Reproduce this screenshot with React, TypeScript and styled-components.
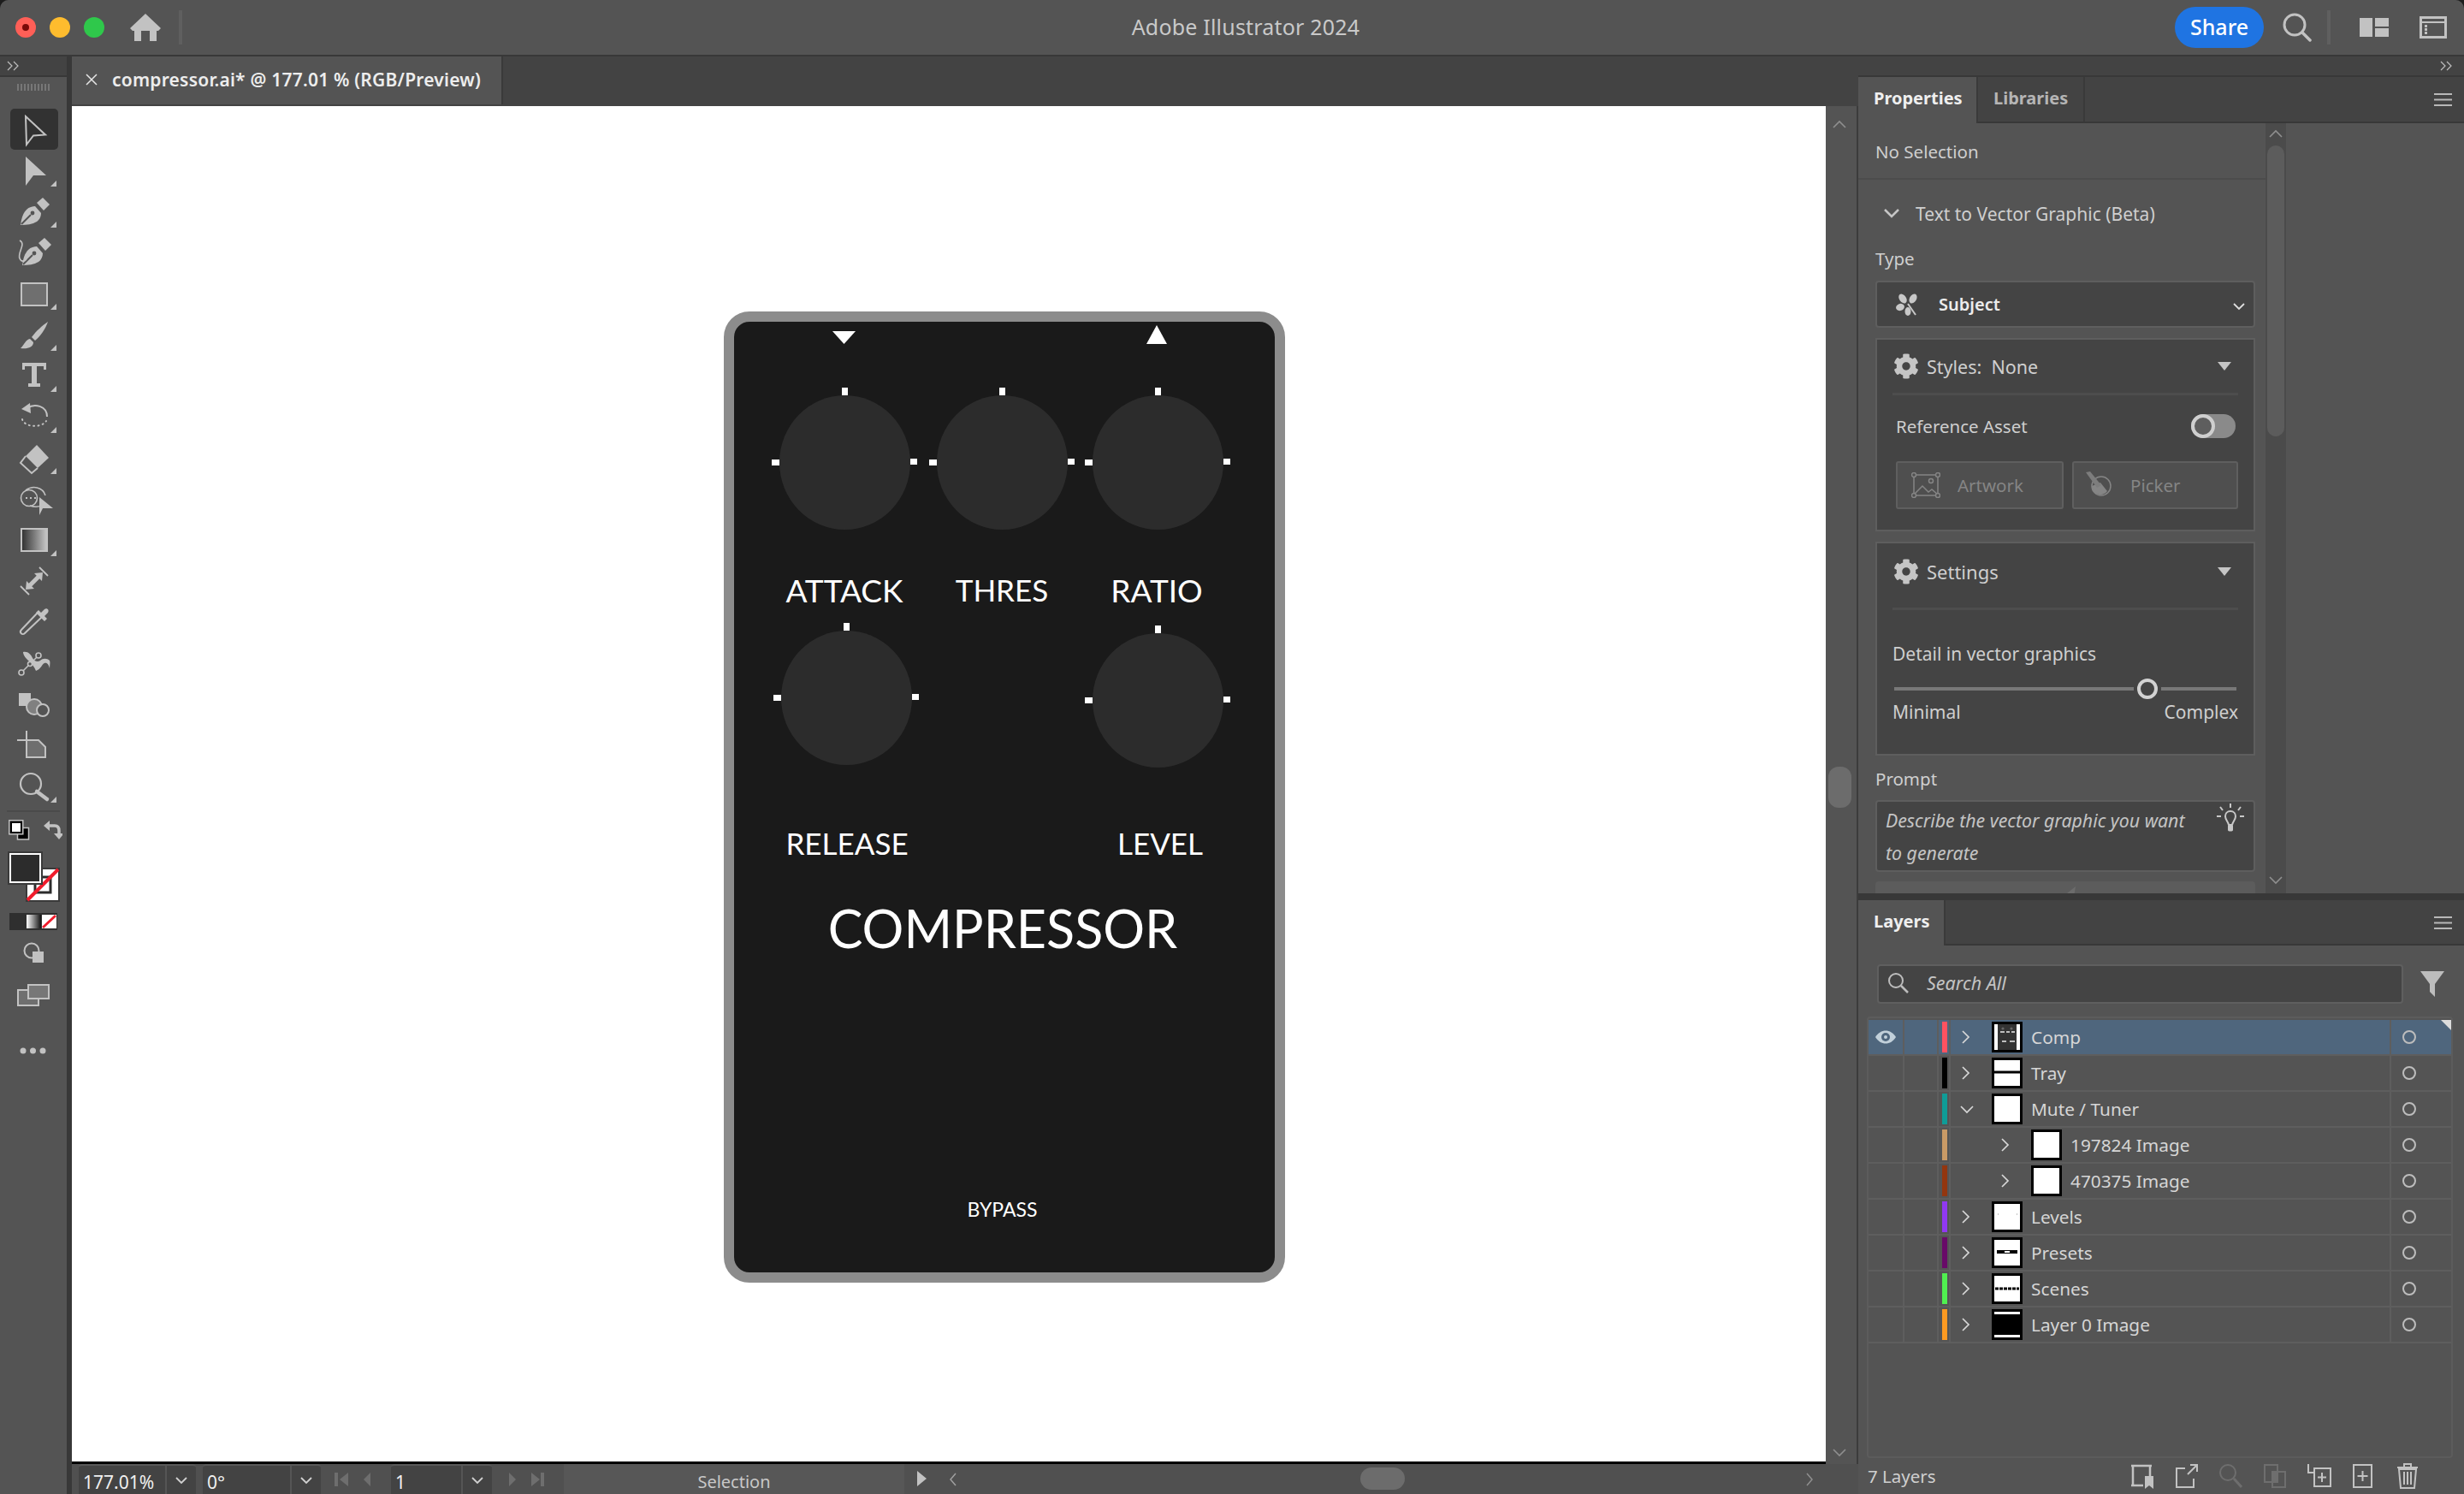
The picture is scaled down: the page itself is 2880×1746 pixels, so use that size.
import React from "react";
import styled, { createGlobalStyle } from "styled-components";
import { FaCog } from "react-icons/fa";

const ICON = "#c2c2c2";
const UI_FONT = `"Noto Sans", "Open Sans", sans-serif`;

const GlobalStyle = createGlobalStyle`
  html, body { margin: 0; padding: 0; background: #1d1d1d; overflow: hidden; }
  * { box-sizing: border-box; }
`;

const Window = styled.div`
  width: 2880px;
  height: 1746px;
  display: flex;
  flex-direction: column;
  background: #383838;
  border-radius: 10px 10px 0 0;
  overflow: hidden;
  font-family: ${UI_FONT};
  font-size: 20.5px;
  color: #cfcfcf;
`;

/* title bar */
const TitleBar = styled.header`
  position: relative;
  flex: 0 0 64px;
  display: flex;
  align-items: center;
  padding-left: 18px;
  background: #545454;
`;
const Light = styled.span<{ $c: string }>`
  width: 24px;
  height: 24px;
  margin-right: 16px;
  border-radius: 50%;
  background: ${(p) => p.$c};
  display: flex;
  align-items: center;
  justify-content: center;
`;
const LightDot = styled.span`
  width: 8px;
  height: 8px;
  border-radius: 50%;
  background: #7a0a08;
`;
const HomeIcon = styled.svg`
  margin-left: 14px;
  width: 36px;
  height: 32px;
`;
const TitleSep = styled.span`
  width: 4px;
  height: 40px;
  background: #5f5f5f;
`;
const WinTitle = styled.div`
  position: absolute;
  left: 32px;
  right: 0;
  top: 16px;
  text-align: center;
  font-size: 25px;
  line-height: 30px;
  letter-spacing: 0.2px;
  color: #c9c9c9;
`;
const TitleRight = styled.div`
  margin-left: auto;
  display: flex;
  align-items: center;
  padding-right: 20px;
`;
const ShareBtn = styled.div`
  width: 104px;
  height: 48px;
  border-radius: 24px;
  background: #1f74e2;
  color: #fff;
  font-size: 25px;
  font-weight: 500;
  line-height: 46px;
  text-align: center;
`;

const Main = styled.div`
  flex: 1;
  display: flex;
  min-height: 0;
  padding-top: 2px;
`;

/* left tool column */
const ToolColumn = styled.aside`
  flex: 0 0 78px;
  margin-right: 6px;
  display: flex;
  flex-direction: column;
  background: #545454;
`;
const MiniStrip = styled.div`
  flex: 0 0 24px;
  display: flex;
  align-items: center;
  padding: 0 8px;
  background: #434343;
  border-bottom: 2px solid #383838;
  color: #bdbdbd;
  font-size: 16px;
  line-height: 1;
`;
const Grip = styled.div`
  height: 8px;
  margin: 8px auto 21px;
  width: 38px;
  background: repeating-linear-gradient(90deg, #777 0 2px, transparent 2px 4px);
`;
const ToolCell = styled.div<{ $active?: boolean }>`
  width: 56px;
  height: 48px;
  margin-left: 12px;
  background: ${(p) => (p.$active ? "#323232" : "transparent")};
  border-radius: 5px;
  display: flex;
`;
const ToolSvg = styled.svg`
  width: 56px;
  height: 48px;
`;
const ToolSep = styled.div`
  height: 2px;
  margin: 4px 8px 9px;
  background: #4a4a4a;
`;
const ColorControls = styled.div`
  display: flex;
  flex-direction: column;
  align-items: center;
`;

/* document column */
const DocColumn = styled.section`
  flex: 0 0 2088px;
  display: flex;
  flex-direction: column;
  min-width: 0;
`;
const TabBar = styled.div`
  flex: 0 0 58px;
  display: flex;
  background: #434343;
`;
const DocTab = styled.div`
  width: 504px;
  height: 56px;
  display: flex;
  align-items: center;
  padding: 0 0 2px 16px;
  background: #545454;
  color: #ededed;
  font-weight: 600;
  font-size: 21px;
  letter-spacing: 0.22px;
  border-right: 2px solid #3a3a3a;
`;
const TabClose = styled.svg`
  width: 14px;
  height: 14px;
  margin-right: 17px;
`;
const CanvasRow = styled.div`
  flex: 1;
  display: flex;
  min-height: 0;
`;
const Canvas = styled.div`
  position: relative;
  flex: 0 0 2050px;
  background: #fff;
  border-bottom: 3px solid #000;
`;
const VScroll = styled.div`
  flex: 1;
  background: #545454;
  display: flex;
  flex-direction: column;
  align-items: center;
  justify-content: space-between;
  padding: 16px 5px 8px 0;
  position: relative;
  border-right: 2px solid #3c3c3c;
`;
const VThumb = styled.div`
  position: absolute;
  top: 772px;
  left: 3px;
  width: 27px;
  height: 48px;
  border-radius: 12px;
  background: #6c6c6c;
`;

/* artboard objects: placed freely on the canvas */
const Pedal = styled.div`
  position: absolute;
  left: 762px;
  top: 240px;
  width: 656px;
  height: 1135px;
  border: 12px solid #8c8c8c;
  border-radius: 30px;
  background: #1a1a1a;
  font-family: "Lato", "Open Sans", sans-serif;
  color: #fff;
`;
const Knob = styled.div<{ $x: number; $y: number }>`
  position: absolute;
  left: ${(p) => p.$x - 858 - 76.5}px;
  top: ${(p) => p.$y - 376 - 78.5}px;
  width: 153px;
  height: 157px;
  border-radius: 50%;
  background: #2c2c2c;
`;
const Tick = styled.span<{ $side: "top" | "left" | "right" }>`
  position: absolute;
  background: #fff;
  ${(p) =>
    p.$side === "top"
      ? "left: 73px; top: -9px; width: 7px; height: 9px;"
      : p.$side === "left"
        ? "left: -9px; top: 75px; width: 9px; height: 7px;"
        : "right: -8px; top: 74px; width: 8px; height: 7px;"}
`;
const PedalLabel = styled.div<{ $x: number; $y: number; $size: number }>`
  position: absolute;
  left: ${(p) => p.$x - 858}px;
  top: ${(p) => p.$y - 377}px;
  transform: translate(-50%, -50%);
  font-size: ${(p) => p.$size}px;
  line-height: 1;
  white-space: nowrap;
`;
const Marker = styled.svg<{ $x: number; $y: number }>`
  position: absolute;
  left: ${(p) => p.$x - 858}px;
  top: ${(p) => p.$y - 376}px;
`;

/* status bar */
const StatusBar = styled.footer`
  flex: 0 0 35px;
  min-height: 0;
  overflow: hidden;
  display: flex;
  align-items: stretch;
  padding-left: 8px;
  background: #505050;
  font-size: 20px;
  position: relative;
`;
const Combo = styled.div<{ $w: number }>`
  width: ${(p) => p.$w}px;
  display: flex;
  background: #434343;
  border-top: 2px solid #595959;
  border-radius: 4px 4px 0 0;
  margin-right: 8px;
`;
const ComboValue = styled.div`
  flex: 1;
  padding-left: 5px;
  font-size: 21px;
  line-height: 38px;
  color: #f0f0f0;
  white-space: nowrap;
`;
const ComboArrow = styled.div`
  flex: 0 0 36px;
  border-left: 2px solid #555;
  display: flex;
  align-items: center;
  justify-content: center;
`;
const NavIcons = styled.svg`
  width: 58px;
  height: 32px;
  align-self: center;
`;
const StatusSel = styled.div`
  width: 398px;
  margin-left: 10px;
  background: #575757;
  text-align: center;
  line-height: 42px;
  color: #c8c8c8;
`;
const HTrack = styled.div`
  flex: 1;
  display: flex;
  align-items: center;
  padding: 0 52px 0 24px;
  justify-content: space-between;
  position: relative;
`;
const HThumb = styled.div`
  position: absolute;
  left: 505px;
  top: 4px;
  width: 52px;
  height: 26px;
  border-radius: 13px;
  background: #6c6c6c;
`;

/* right dock */
const Dock = styled.aside`
  flex: 0 0 708px;
  display: flex;
  flex-direction: column;
  min-width: 0;
`;
const DockStrip = styled.div`
  flex: 0 0 24px;
  background: #434343;
  display: flex;
  align-items: center;
  justify-content: flex-end;
  padding-right: 14px;
  border-bottom: 2px solid #383838;
  color: #bdbdbd;
  font-size: 16px;
`;
const TabRow = styled.div`
  flex: 0 0 54px;
  display: flex;
  background: #434343;
  border-bottom: 2px solid #383838;
`;
const PanelTab = styled.div<{ $active?: boolean; $w: number }>`
  width: ${(p) => p.$w}px;
  background: ${(p) => (p.$active ? "#545454" : "#434343")};
  margin-bottom: ${(p) => (p.$active ? "-2px" : "0")};
  border-right: 2px solid #3a3a3a;
  color: ${(p) => (p.$active ? "#efefef" : "#b5b5b5")};
  font-weight: 700;
  font-size: 20px;
  line-height: 50px;
  padding-left: 18px;
`;
const Burger = styled.svg`
  margin: 19px 14px 0 auto;
  width: 21px;
  height: 15px;
`;
const PropsPanel = styled.div`
  flex: 0 0 902px;
  display: flex;
  background: #545454;
  overflow: hidden;
  border-bottom: 2px solid #383838;
`;
const PropsBody = styled.div`
  flex: 0 0 476px;
  display: flex;
  flex-direction: column;
  & > * {
    flex-shrink: 0;
  }
`;
const NoSel = styled.div`
  height: 66px;
  line-height: 66px;
  padding-left: 20px;
  border-bottom: 2px solid #4c4c4c;
`;
const SectionHead = styled.div`
  height: 78px;
  display: flex;
  align-items: center;
  padding: 2px 0 0 30px;
  gap: 19px;
  font-size: 21px;
`;
const FieldLabel = styled.div`
  margin-left: 20px;
  line-height: 28px;
`;
const SelectBox = styled.div`
  margin: 12px 0 0 20px;
  width: 444px;
  height: 55px;
  display: flex;
  align-items: center;
  padding: 0 10px 0 22px;
  background: #444;
  border: 2px solid #5e5e5e;
  border-radius: 4px;
  color: #ececec;
  font-weight: 600;
  gap: 22px;
  font-size: 20px;
`;
const SubBox = styled.div<{ $h: number; $mt: number }>`
  margin: ${(p) => p.$mt}px 0 0 20px;
  width: 444px;
  height: ${(p) => p.$h}px;
  background: #444;
  border: 2px solid #5e5e5e;
  padding: 0 18px;
  display: flex;
  flex-direction: column;
`;
const BoxHead = styled.div<{ $h: number; $lift: number; $size: number }>`
  display: flex;
  align-items: center;
  flex: 0 0 ${(p) => p.$h}px;
  border-bottom: 3px solid #4d4d4d;
  padding: 0 0 ${(p) => p.$lift}px 1px;
  gap: 9px;
  font-size: ${(p) => p.$size}px;
`;
const HeadGear = styled(FaCog)`
  width: 30px;
  height: 30px;
  color: #c5c5c5;
`;
const HeadTri = styled.span`
  margin-left: auto;
  margin-right: 8px;
  width: 0;
  height: 0;
  border-left: 8px solid transparent;
  border-right: 8px solid transparent;
  border-top: 10px solid #c5c5c5;
`;
const RefRow = styled.div`
  display: flex;
  align-items: center;
  justify-content: space-between;
  flex: 0 0 72px;
  margin-bottom: 5px;
  padding: 0 3px 0 4px;
`;
const Toggle = styled.div`
  width: 52px;
  height: 28px;
  border-radius: 14px;
  background: #8a8a8a;
  position: relative;
`;
const ToggleKnob = styled.span`
  position: absolute;
  left: 0;
  top: 0;
  width: 28px;
  height: 28px;
  border-radius: 50%;
  border: 4px solid #cfcfcf;
  background: #5e5e5e;
`;
const GhostRow = styled.div`
  display: flex;
  gap: 10px;
  padding-left: 4px;
`;
const GhostBtn = styled.div<{ $w: number }>`
  width: ${(p) => p.$w}px;
  height: 56px;
  display: flex;
  align-items: center;
  gap: 20px;
  padding-left: 16px;
  background: #4f4f4f;
  border: 2px solid #5f5f5f;
  border-radius: 3px;
  color: #858585;
`;
const DetailLabel = styled.div`
  margin-top: 37px;
  line-height: 28px;
  font-size: 21px;
`;
const SliderRow = styled.div`
  display: flex;
  align-items: center;
  flex: 0 0 24px;
  margin-top: 15px;
  padding: 0 2px;
`;
const SliderLine = styled.span<{ $w?: number }>`
  height: 4px;
  background: #787878;
  ${(p) => (p.$w ? `width: ${p.$w}px;` : "flex: 1;")}
`;
const SliderKnob = styled.span`
  width: 24px;
  height: 24px;
  margin: 0 4px;
  border-radius: 50%;
  border: 4px solid #d2d2d2;
  background: #444;
`;
const SliderEnds = styled.div`
  display: flex;
  justify-content: space-between;
  line-height: 28px;
  margin-top: 1px;
  font-size: 21px;
`;
const PromptBox = styled.div`
  margin: 11px 0 0 20px;
  width: 444px;
  height: 84px;
  display: flex;
  justify-content: space-between;
  padding: 3px 10px 0 10px;
  background: #444;
  border: 2px solid #5e5e5e;
  border-radius: 4px;
  font-style: italic;
  font-size: 21.3px;
  color: #c4c4c4;
  line-height: 38px;
`;
const PromptText = styled.div`
  width: 360px;
`;
const ClippedBtn = styled.div`
  margin: 11px 0 0 20px;
  width: 444px;
  height: 40px;
  padding-top: 6px;
  background: #5c5c5c;
  border-radius: 4px;
  display: flex;
  justify-content: center;
`;
const PropsScroll = styled.div`
  flex: 0 0 24px;
  background: #4b4b4b;
  display: flex;
  flex-direction: column;
  align-items: center;
  position: relative;
  padding: 7px 0 10px;
  justify-content: space-between;
`;
const PropsThumb = styled.div`
  position: absolute;
  top: 26px;
  left: 2px;
  width: 20px;
  height: 340px;
  border-radius: 10px;
  background: #5c5c5c;
`;

/* layers */
const LayersPanel = styled.div`
  flex: 1;
  margin-top: 6px;
  display: flex;
  flex-direction: column;
  background: #545454;
  min-height: 0;
`;
const LayerTabs = styled.div`
  flex: 0 0 53px;
  display: flex;
  background: #434343;
  border-bottom: 2px solid #383838;
`;
const SearchRow = styled.div`
  flex: 0 0 83px;
  padding: 22px 11px 0 22px;
  display: flex;
  gap: 20px;
`;
const SearchBox = styled.div`
  width: 615px;
  height: 46px;
  display: flex;
  align-items: center;
  gap: 20px;
  padding: 0 0 3px 10px;
  background: #444;
  border: 2px solid #5f5f5f;
  border-radius: 4px;
  font-style: italic;
  font-size: 21.5px;
  color: #c4c4c4;
`;
const LayerList = styled.div`
  margin: 0 13px 0 10px;
  height: 516px;
  padding-top: 2px;
  border: 2px solid #5c5c5c;
  border-radius: 4px;
`;
const LayerRow = styled.div<{ $selected?: boolean }>`
  position: relative;
  height: 42px;
  display: grid;
  grid-template-columns: 42px 40px 14px 1fr 70px;
  border-bottom: 2px solid #5e5e5e;
  background: ${(p) => (p.$selected ? "#4f667d" : "transparent")};
  color: #d6d6d6;
  font-size: 20.8px;
`;
const Cell = styled.div`
  border-right: 2px solid #5e5e5e;
  display: flex;
  align-items: center;
  justify-content: center;
`;
const ColorCell = styled.div`
  border-right: 2px solid #5e5e5e;
  padding: 2px 2px 2px 4px;
  display: flex;
`;
const ColorBar = styled.span<{ $c: string }>`
  flex: 1;
  background: ${(p) => p.$c};
`;
const NameCell = styled.div<{ $indent: boolean }>`
  border-right: 2px solid #5e5e5e;
  display: flex;
  align-items: center;
  padding-left: ${(p) => (p.$indent ? 58 : 12)}px;
`;
const Chevron = styled.svg`
  width: 12px;
  height: 18px;
  margin-right: 24px;
  flex: none;
`;
const Thumb = styled.div`
  width: 36px;
  height: 36px;
  margin-right: 10px;
  border: 3px solid #000;
  background: #fff;
  flex: none;
  overflow: hidden;
`;
const ThumbArt = styled.svg`
  display: block;
  width: 30px;
  height: 30px;
`;
const TargetCell = styled.div`
  display: flex;
  align-items: center;
  justify-content: flex-start;
  padding-left: 13px;
`;
const TargetRing = styled.span`
  width: 16px;
  height: 16px;
  border: 2px solid #bdbdbd;
  border-radius: 50%;
`;
const CornerMark = styled.span`
  position: absolute;
  right: 0;
  top: 0;
  width: 0;
  height: 0;
  border-top: 12px solid #dcdcdc;
  border-left: 12px solid transparent;
`;
const LayerFoot = styled.div`
  flex: 1;
  display: flex;
  align-items: center;
  position: relative;
  padding-left: 11px;
`;
const FootIcons = styled.div`
  position: absolute;
  left: 318px;
  top: 6px;
  display: flex;
  gap: 23.7px;
`;
const FootSvg = styled.svg`
  width: 28px;
  height: 30px;
`;

const I = { stroke: ICON, strokeWidth: 2, fill: "none" };
const Corner = () => <path d="M47 43h7v-7z" fill={ICON} />;

const Nib = ({ dx = 0, dy = 0 }: { dx?: number; dy?: number }) => (
  <g transform={`translate(${dx} ${dy})`} fill={ICON}>
    <path d="M12 40c1-8 3-14 7-18 3-3 7-4 10-4l7 8c0 4-2 8-5 10-5 3-12 4-19 4z" />
    <path d="M31 14l7-6 8 8-7 7z" />
    <path d="M13 39l11-11" stroke="#545454" strokeWidth="2" />
    <circle cx="26" cy="26" r="2.4" fill="#545454" />
  </g>
);

const tools: { icon: React.ReactNode; corner?: boolean; active?: boolean }[] = [
  { active: true, icon: <path d="M18 9l23 21.5-14 1L19 42z" {...I} /> },
  { corner: true, icon: <path d="M18 8l24 22H27l-9 12z" fill={ICON} /> },
  { corner: true, icon: <Nib /> },
  {
    icon: (
      <>
        <Nib dx={2} dy={-1} />
        <path d="M11 10c8 4-3 14 0 21 2 5 6 3 8 1" {...I} strokeWidth={1.6} />
      </>
    ),
  },
  { corner: true, icon: <rect x="13" y="12" width="30" height="26" fill="#6f6f6f" stroke={ICON} strokeWidth="2" /> },
  {
    corner: true,
    icon: (
      <g fill={ICON}>
        <path d="M44 9c-6 4-14 11-19 18l4 4c6-5 12-13 15-22z" />
        <path d="M23 29c-5 1-6 6-11 11 8 1 15-1 15-7z" />
      </g>
    ),
  },
  { corner: true, icon: <path d="M14 9h28v8h-3v-4h-8v20h4v4H21v-4h4V13h-8v4h-3z" fill={ICON} /> },
  {
    corner: true,
    icon: (
      <>
        <path d="M13 15l10-7 1 12z" fill={ICON} />
        <path d="M20 14c8-6 23-3 23 10" {...I} />
        <path d="M14 27c2 9 22 11 28 2" {...I} strokeDasharray="1 4.4" strokeLinecap="round" />
      </>
    ),
  },
  {
    corner: true,
    icon: (
      <>
        <path d="M31 9l14 15-13 12-14-14z" fill={ICON} />
        <path d="M18 22l-6 8 13 12 7-6" {...I} />
      </>
    ),
  },
  {
    icon: (
      <>
        <circle cx="22" cy="23" r="9.5" {...I} strokeWidth={1.6} />
        <path d="M18 14c8-6 20-4 23 6M41 30c-5 3-12 4-18 2" {...I} strokeWidth={1.6} />
        <path d="M18 23h2M23 23h2M28 23h2" stroke={ICON} strokeWidth="2" />
        <path d="M34 22l16 13H38l-4 8z" fill={ICON} />
      </>
    ),
  },
  {
    corner: true,
    icon: (
      <>
        <defs>
          <linearGradient id="gt" x1="0" x2="1" y1="0" y2="0">
            <stop offset="0" stopColor="#2e2e2e" />
            <stop offset="1" stopColor="#c8c8c8" />
          </linearGradient>
        </defs>
        <rect x="13" y="11" width="30" height="26" fill="url(#gt)" stroke={ICON} strokeWidth="2" />
      </>
    ),
  },
  {
    icon: (
      <>
        <path d="M12 30l10 10M34 8l10 10" {...I} strokeWidth={1.8} />
        <path d="M23 29l10-10" stroke={ICON} strokeWidth="5" />
        <path d="M38 14l-10 1 9 9zM18 34l1-10 9 9z" fill={ICON} />
      </>
    ),
  },
  {
    icon: (
      <>
        <path d="M37 18L17 37c-3 3-7-1-4-4l19-20" {...I} />
        <path d="M30 13l3-3 3 3 4-4c3-2 6 1 4 4l-4 4 3 3-3 3z" fill={ICON} />
      </>
    ),
  },
  {
    icon: (
      <>
        <path d="M15 11c5-1 9 2 11 7 2 4 6 5 9 3 3-3 8-3 11 0 1 3 0 6 0 9-1-4-3-7-6-6-3 1-4 7-10 9-2-5-5-8-8-11-3-3-7-7-7-11z" fill={ICON} />
        <path d="M13 35l20-20" {...I} strokeWidth={1.6} />
        <circle cx="13" cy="35" r="3" {...I} strokeWidth={1.6} fill="#545454" />
        <circle cx="33" cy="15" r="3" {...I} strokeWidth={1.6} fill="#545454" />
        <circle cx="23" cy="25" r="2.500" {...I} strokeWidth={1.6} fill="#545454" />
      </>
    ),
  },
  {
    icon: (
      <>
        <rect x="10" y="11" width="14" height="15" fill={ICON} />
        <circle cx="28" cy="27" r="9" fill="#808080" stroke={ICON} strokeWidth="2" />
        <circle cx="38" cy="31" r="7" fill="#545454" stroke={ICON} strokeWidth="2" />
      </>
    ),
  },
  {
    icon: (
      <>
        <path d="M19 18h14l8 8v12H19z" fill="#6f6f6f" stroke={ICON} strokeWidth="2" />
        <path d="M8 18h11M19 7v11" {...I} />
      </>
    ),
  },
  {
    corner: true,
    icon: (
      <>
        <circle cx="24" cy="21" r="12" {...I} strokeWidth={2.2} />
        <path d="M31 30l12 9" stroke={ICON} strokeWidth="4.5" strokeLinecap="round" />
      </>
    ),
  },
];

const Pad = ({ children, w, h, mt }: { children: React.ReactNode; w: number; h: number; mt: number }) => (
  <svg width={w} height={h} viewBox={`0 0 ${w} ${h}`} style={{ marginTop: mt, flex: "none" }}>
    {children}
  </svg>
);

const ChevRight = () => (
  <Chevron viewBox="0 0 12 18">
    <path d="M2 2l7 7-7 7" stroke="#d8d8d8" strokeWidth="1.7" fill="none" />
  </Chevron>
);
const ChevDown = () => (
  <Chevron viewBox="0 0 12 18" style={{ overflow: "visible" }}>
    <path d="M0 6l7 7 7-7" stroke="#d8d8d8" strokeWidth="1.7" fill="none" />
  </Chevron>
);
const SmallDown = ({ c = "#d0d0d0" }: { c?: string }) => (
  <svg width="14" height="10" viewBox="0 0 14 10">
    <path d="M1 2l6 6 6-6" stroke={c} strokeWidth="1.8" fill="none" />
  </svg>
);
const ArrowUp = () => (
  <svg width="16" height="10" viewBox="0 0 16 10">
    <path d="M1 9l7-7 7 7" stroke="#8f8f8f" strokeWidth="1.6" fill="none" />
  </svg>
);
const ArrowDown = () => (
  <svg width="16" height="10" viewBox="0 0 16 10">
    <path d="M1 1l7 7 7-7" stroke="#8f8f8f" strokeWidth="1.6" fill="none" />
  </svg>
);
const BurgerIcon = () => (
  <Burger viewBox="0 0 21 15">
    <path d="M0 1h21M0 7.500h21M0 14h21" stroke="#b8b8b8" strokeWidth="2" />
  </Burger>
);
const Chevrons = () => (
  <svg width="14" height="12" viewBox="0 0 14 12">
    <path d="M1 1l5 5-5 5M8 1l5 5-5 5" stroke="#bdbdbd" strokeWidth="1.2" fill="none" />
  </svg>
);

const art: Record<string, React.ReactNode> = {
  comp: (
    <>
      <rect x="4" y="0" width="22" height="30" fill="#333" />
      <path d="M7 9h5M14 9h4M20 9h4M9 20h5M18 20h6" stroke="#eee" strokeWidth="1.4" />
      <circle cx="10" cy="5" r="1.600" fill="#666" />
      <circle cx="20" cy="5" r="1.600" fill="#666" />
    </>
  ),
  tray: <path d="M0 14h30" stroke="#000" strokeWidth="3" />,
  blank: null,
  levels: <path d="M4 12h1M26 12h1" stroke="#888" strokeWidth="1" />,
  presets: (
    <>
      <rect x="3" y="12" width="24" height="4" fill="#000" />
      <rect x="12" y="13" width="6" height="2" fill="#fff" />
    </>
  ),
  scenes: <path d="M1 15h28" stroke="#000" strokeWidth="3" strokeDasharray="4 1" />,
  image: <rect x="0" y="3" width="30" height="24" fill="#000" />,
};

const layers = [
  { name: "Comp", color: "#ff5260", art: "comp", selected: true, eye: true },
  { name: "Tray", color: "#000", art: "tray" },
  { name: "Mute / Tuner", color: "#0f9c97", art: "blank", open: true },
  { name: "197824 Image", color: "#c99a66", art: "blank", indent: true },
  { name: "470375 Image", color: "#93360f", art: "blank", indent: true },
  { name: "Levels", color: "#9038f2", art: "levels" },
  { name: "Presets", color: "#680a68", art: "presets" },
  { name: "Scenes", color: "#50f050", art: "scenes" },
  { name: "Layer 0 Image", color: "#fd9a22", art: "image" },
];

const knobs = [
  { x: 987, y: 540 },
  { x: 1171.500, y: 540 },
  { x: 1353, y: 540 },
  { x: 989, y: 815 },
  { x: 1353, y: 818 },
];

const labels = [
  { t: "ATTACK", x: 987, y: 690, s: 37 },
  { t: "THRES", x: 1171, y: 690, s: 35 },
  { t: "RATIO", x: 1352, y: 690, s: 37 },
  { t: "RELEASE", x: 990, y: 986, s: 35 },
  { t: "LEVEL", x: 1356, y: 986, s: 35 },
  { t: "COMPRESSOR", x: 1172, y: 1085, s: 61 },
  { t: "BYPASS", x: 1171.500, y: 1414, s: 23 },
];

export default function App(): JSX.Element {
  return (
    <>
      <GlobalStyle />
      <Window>
        <TitleBar>
          <Light $c="#ff5f57">
            <LightDot />
          </Light>
          <Light $c="#febc2e" />
          <Light $c="#2fc84b" />
          <HomeIcon viewBox="0 0 36 32">
            <path d="M18 0l18 17-3 3h-2v12H23V20H13v12H5V20H3l-3-3z" fill={ICON} />
          </HomeIcon>
          <TitleSep style={{ marginLeft: 21 }} />
          <WinTitle>Adobe Illustrator 2024</WinTitle>
          <TitleRight>
            <ShareBtn>Share</ShareBtn>
            <svg width="34" height="34" viewBox="0 0 34 34" style={{ marginLeft: 22 }}>
              <circle cx="14" cy="14" r="12" stroke={ICON} strokeWidth="3" fill="none" />
              <path d="M23 23l9 9" stroke={ICON} strokeWidth="3.500" strokeLinecap="round" />
            </svg>
            <TitleSep style={{ marginLeft: 18 }} />
            <svg width="34" height="22" viewBox="0 0 34 22" style={{ marginLeft: 34 }}>
              <path d="M0 0h15v22H0zM18 0h16v10H18zM18 12h16v10H18z" fill={ICON} />
            </svg>
            <svg width="32" height="26" viewBox="0 0 32 26" style={{ marginLeft: 36 }}>
              <rect x="1.500" y="1.500" width="29" height="23" stroke={ICON} strokeWidth="3" fill="none" />
              <path d="M1 7h30" stroke={ICON} strokeWidth="2" />
              <path d="M6 10h3v3H6zM6 14h3v3H6zM6 18h3v3H6z" fill={ICON} />
            </svg>
          </TitleRight>
        </TitleBar>
        <Main>
          <ToolColumn>
            <MiniStrip>
              <Chevrons />
            </MiniStrip>
            <Grip />
            {tools.map((t, i) => (
              <ToolCell key={i} $active={t.active}>
                <ToolSvg viewBox="0 0 56 48">
                  {t.icon}
                  {t.corner && <Corner />}
                </ToolSvg>
              </ToolCell>
            ))}
            <ToolSep />
            <ColorControls>
              <Pad w={68} h={24} mt={0}>
                <rect x="15.500" y="9.500" width="13" height="13.500" fill="#000" stroke={ICON} strokeWidth="1.500" />
                <rect x="5.800" y="0.800" width="16" height="16" fill="#000" stroke={ICON} strokeWidth="1.500" />
                <rect x="9" y="4" width="10" height="10" fill="#fff" />
                <path d="M51 7h8c4 0 5 3 5 6v5" stroke={ICON} strokeWidth="3.500" fill="none" />
                <path d="M53 1v12l-7-6zM58 16h12l-6 7z" fill={ICON} />
              </Pad>
              <Pad w={68} h={60} mt={13}>
                <rect x="26" y="20" width="38" height="38" fill="#fff" stroke="#3a3a3a" strokeWidth="2" />
                <rect x="36" y="30" width="18" height="18" fill="none" stroke="#2c2c2c" strokeWidth="3" />
                <path d="M27 57l36-36" stroke="#f01c2c" strokeWidth="4" />
                <rect x="5" y="1" width="39" height="37" fill="#2c2c2c" stroke="#3a3a3a" strokeWidth="2" />
                <rect x="7" y="3" width="35" height="33" fill="none" stroke="#fff" strokeWidth="2" />
              </Pad>
              <Pad w={56} h={20} mt={12}>
                <defs>
                  <linearGradient id="gm" x1="0" x2="1" y1="0" y2="0">
                    <stop offset="0" stopColor="#fff" />
                    <stop offset="1" stopColor="#111" />
                  </linearGradient>
                </defs>
                <rect width="56" height="20" fill="#2f2f2f" />
                <rect x="20" y="2" width="17" height="16" fill="url(#gm)" />
                <rect x="38" y="2" width="17" height="16" fill="#fff" />
                <path d="M39 17l15-14" stroke="#f01c2c" strokeWidth="3" />
              </Pad>
              <Pad w={26} h={26} mt={13}>
                <circle cx="11" cy="11" r="8.500" fill="none" stroke={ICON} strokeWidth="2" />
                <rect x="12" y="12" width="13" height="13" fill={ICON} />
              </Pad>
              <Pad w={38} h={26} mt={24}>
                <rect x="1" y="7" width="24" height="18" fill="#6f6f6f" stroke={ICON} strokeWidth="2" />
                <rect x="13" y="1" width="24" height="16" fill="#777" stroke={ICON} strokeWidth="2" />
              </Pad>
              <Pad w={32} h={8} mt={48}>
                <circle cx="4" cy="4" r="3.500" fill={ICON} />
                <circle cx="15.500" cy="4" r="3.500" fill={ICON} />
                <circle cx="27" cy="4" r="3.500" fill={ICON} />
              </Pad>
            </ColorControls>
          </ToolColumn>
          <DocColumn>
            <TabBar>
              <DocTab>
                <TabClose viewBox="0 0 14 14">
                  <path d="M1 1l12 12M13 1L1 13" stroke="#e6e6e6" strokeWidth="1.500" />
                </TabClose>
                compressor.ai* @ 177.01 % (RGB/Preview)
              </DocTab>
            </TabBar>
            <CanvasRow>
              <Canvas>
                <Pedal>
                  <Marker $x={973} $y={387} width="27" height="15" viewBox="0 0 27 15">
                    <path d="M0 0h27L13.500 15z" fill="#fff" />
                  </Marker>
                  <Marker $x={1340} $y={380} width="24" height="22" viewBox="0 0 24 22">
                    <path d="M12 0l12 22H0z" fill="#fff" />
                  </Marker>
                  {knobs.map((k) => (
                    <Knob key={`${k.x}-${k.y}`} $x={k.x} $y={k.y}>
                      <Tick $side="top" />
                      <Tick $side="left" />
                      <Tick $side="right" />
                    </Knob>
                  ))}
                  {labels.map((l) => (
                    <PedalLabel key={l.t} $x={l.x} $y={l.y} $size={l.s}>
                      {l.t}
                    </PedalLabel>
                  ))}
                </Pedal>
              </Canvas>
              <VScroll>
                <ArrowUp />
                <VThumb />
                <ArrowDown />
              </VScroll>
            </CanvasRow>
            <StatusBar>
              <Combo $w={137}>
                <ComboValue>177.01%</ComboValue>
                <ComboArrow>
                  <SmallDown />
                </ComboArrow>
              </Combo>
              <Combo $w={138}>
                <ComboValue>0°</ComboValue>
                <ComboArrow>
                  <SmallDown />
                </ComboArrow>
              </Combo>
              <NavIcons viewBox="0 0 58 32" style={{ marginRight: 16 }}>
                <path d="M8 8h4v16H8zM24 8l-10 8 10 8zM50 8l-8 8 8 8z" fill="#6e6e6e" />
              </NavIcons>
              <Combo $w={118}>
                <ComboValue>1</ComboValue>
                <ComboArrow>
                  <SmallDown />
                </ComboArrow>
              </Combo>
              <NavIcons viewBox="0 0 58 32" style={{ marginLeft: 8 }}>
                <path d="M4 8l8 8-8 8zM30 8l10 8-10 8zM41 8h4v16h-4z" fill="#6e6e6e" />
              </NavIcons>
              <StatusSel>Selection</StatusSel>
              <svg width="14" height="30" viewBox="0 0 14 30" style={{ margin: "2px 0 0 14px" }}>
                <path d="M1 6l11 9-11 9z" fill="#c2c2c2" />
              </svg>
              <HTrack>
                <svg width="10" height="18" viewBox="0 0 10 18">
                  <path d="M8 2L2 9l6 7" stroke="#a0a0a0" strokeWidth="1.500" fill="none" />
                </svg>
                <HThumb />
                <svg width="10" height="18" viewBox="0 0 10 18">
                  <path d="M2 2l6 7-6 7" stroke="#8f8f8f" strokeWidth="1.500" fill="none" />
                </svg>
              </HTrack>
            </StatusBar>
          </DocColumn>
          <Dock>
            <DockStrip>
              <Chevrons />
            </DockStrip>
            <TabRow>
              <PanelTab $active $w={140}>
                Properties
              </PanelTab>
              <PanelTab $w={125}>Libraries</PanelTab>
              <BurgerIcon />
            </TabRow>
            <PropsPanel>
              <PropsBody>
                <NoSel>No Selection</NoSel>
                <SectionHead>
                  <svg width="18" height="12" viewBox="0 0 18 12">
                    <path d="M1 1l8 8 8-8" stroke="#c6c6c6" strokeWidth="2.500" fill="none" />
                  </svg>
                  Text to Vector Graphic (Beta)
                </SectionHead>
                <FieldLabel>Type</FieldLabel>
                <SelectBox>
                  <svg width="28" height="28" viewBox="0 0 28 28">
                    <g fill="#c8c8c8">
                      <ellipse cx="8" cy="7" rx="4" ry="6" transform="rotate(-35 8 7)" />
                      <ellipse cx="20" cy="7" rx="4" ry="6" transform="rotate(30 20 7)" />
                      <ellipse cx="5" cy="17" rx="4" ry="5" transform="rotate(70 5 17)" />
                      <ellipse cx="14" cy="22" rx="3.500" ry="5" />
                    </g>
                    <path d="M14 13l9 13" stroke="#c8c8c8" strokeWidth="2" />
                  </svg>
                  Subject
                  <span style={{ marginLeft: "auto" }}>
                    <SmallDown c="#dedede" />
                  </span>
                </SelectBox>
                <SubBox $h={226} $mt={12}>
                  <BoxHead $h={65} $lift={0} $size={21.5}>
                    <HeadGear />
                    Styles:&nbsp; None
                    <HeadTri />
                  </BoxHead>
                  <RefRow>
                    Reference Asset
                    <Toggle>
                      <ToggleKnob />
                    </Toggle>
                  </RefRow>
                  <GhostRow>
                    <GhostBtn $w={196}>
                      <svg width="34" height="30" viewBox="0 0 34 30">
                        <rect x="3" y="3" width="28" height="24" fill="none" stroke="#858585" strokeWidth="1.500" />
                        <path d="M4 25l9-9 7 7 4-3 7 6" fill="none" stroke="#858585" strokeWidth="1.500" />
                        <g fill="#4f4f4f" stroke="#858585" strokeWidth="1.500">
                          <circle cx="3" cy="3" r="2.500" />
                          <circle cx="31" cy="3" r="2.500" />
                          <circle cx="3" cy="27" r="2.500" />
                          <circle cx="31" cy="27" r="2.500" />
                          <circle cx="23" cy="10" r="2.500" />
                        </g>
                      </svg>
                      Artwork
                    </GhostBtn>
                    <GhostBtn $w={194}>
                      <svg width="34" height="34" viewBox="0 0 34 34" style={{ marginLeft: -4 }}>
                        <circle cx="20" cy="18" r="11" fill="none" stroke="#858585" strokeWidth="1.500" />
                        <path d="M9 18a10 10 0 0 0 18 6l-8-10z" fill="#858585" />
                        <path d="M2 2l5-1 13 16-5 3z" fill="#7d7d7d" />
                      </svg>
                      Picker
                    </GhostBtn>
                  </GhostRow>
                </SubBox>
                <SubBox $h={250} $mt={12}>
                  <BoxHead $h={78} $lift={10} $size={22}>
                    <HeadGear />
                    Settings
                    <HeadTri />
                  </BoxHead>
                  <DetailLabel>Detail in vector graphics</DetailLabel>
                  <SliderRow>
                    <SliderLine $w={280} />
                    <SliderKnob />
                    <SliderLine />
                  </SliderRow>
                  <SliderEnds>
                    <span>Minimal</span>
                    <span>Complex</span>
                  </SliderEnds>
                </SubBox>
                <FieldLabel style={{ marginTop: 13 }}>Prompt</FieldLabel>
                <PromptBox>
                  <PromptText>Describe the vector graphic you want to generate</PromptText>
                  <svg width="34" height="38" viewBox="0 0 34 38" style={{ flex: "none", marginTop: -2 }}>
                    <path d="M17 10c-4 0-6 3-6 6 0 4 3 6 4 10h4c1-4 4-6 4-10 0-3-2-6-6-6z" fill="none" stroke="#c8c8c8" strokeWidth="2" />
                    <path d="M14 27h6v5c0 2-6 2-6 0z" fill="#c8c8c8" />
                    <path d="M17 1v5M5 5l3 4M29 5l-3 4M1 16h5M28 16h5" stroke="#c8c8c8" strokeWidth="2" />
                  </svg>
                </PromptBox>
                <ClippedBtn>
                  <svg width="28" height="12" viewBox="0 0 28 12">
                    <path d="M0 12l10-4 4 4zM16 8l10-8-2 12z" fill="#6c6c6c" />
                  </svg>
                </ClippedBtn>
              </PropsBody>
              <PropsScroll>
                <ArrowUp />
                <PropsThumb />
                <ArrowDown />
              </PropsScroll>
            </PropsPanel>
            <LayersPanel>
              <LayerTabs>
                <PanelTab $active $w={102}>
                  Layers
                </PanelTab>
                <BurgerIcon />
              </LayerTabs>
              <SearchRow>
                <SearchBox>
                  <svg width="26" height="26" viewBox="0 0 26 26">
                    <circle cx="10" cy="10" r="8" fill="none" stroke="#bdbdbd" strokeWidth="2" />
                    <path d="M16 16l8 8" stroke="#bdbdbd" strokeWidth="2.500" />
                  </svg>
                  Search All
                </SearchBox>
                <svg width="28" height="30" viewBox="0 0 28 30" style={{ marginTop: 8 }}>
                  <path d="M0 0h28L17 15v15l-6-6v-9z" fill="#bdbdbd" />
                </svg>
              </SearchRow>
              <LayerList>
                {layers.map((l) => (
                  <LayerRow key={l.name} $selected={l.selected}>
                    <Cell>
                      {l.eye && (
                        <svg width="26" height="18" viewBox="0 0 26 18">
                          <path d="M1 9c6-10 18-10 24 0-6 10-18 10-24 0z" fill="#c2d0da" />
                          <circle cx="13" cy="9" r="5" fill="#4f667d" />
                          <circle cx="13" cy="9" r="2" fill="#c2d0da" />
                        </svg>
                      )}
                    </Cell>
                    <Cell />
                    <ColorCell>
                      <ColorBar $c={l.color} />
                    </ColorCell>
                    <NameCell $indent={!!l.indent}>
                      {l.open ? <ChevDown /> : <ChevRight />}
                      <Thumb>
                        <ThumbArt viewBox="0 0 30 30">{art[l.art]}</ThumbArt>
                      </Thumb>
                      {l.name}
                    </NameCell>
                    <TargetCell>
                      <TargetRing />
                    </TargetCell>
                    {l.selected && <CornerMark />}
                  </LayerRow>
                ))}
              </LayerList>
              <LayerFoot>
                7 Layers
                <FootIcons>
                  <FootSvg viewBox="0 0 28 30">
                    <path d="M3 2v24M1 3h24M1 26h14M23 3v12" stroke={ICON} strokeWidth="2.500" fill="none" />
                    <path d="M17 15h10v15l-5-4-5 4z" fill={ICON} />
                  </FootSvg>
                  <FootSvg viewBox="0 0 28 30">
                    <path d="M12 6H2v22h20V18M15 13L26 2M18 2h8v8" stroke={ICON} strokeWidth="2" fill="none" />
                  </FootSvg>
                  <FootSvg viewBox="0 0 28 30">
                    <circle cx="11" cy="11" r="9" fill="none" stroke="#6e6e6e" strokeWidth="2" />
                    <path d="M18 18l9 10" stroke="#6e6e6e" strokeWidth="3" />
                  </FootSvg>
                  <FootSvg viewBox="0 0 28 30">
                    <rect x="2" y="2" width="15" height="20" fill="none" stroke="#6e6e6e" strokeWidth="2" />
                    <rect x="11" y="10" width="15" height="18" fill="none" stroke="#6e6e6e" strokeWidth="2" />
                    <rect x="11" y="10" width="6" height="12" fill="#6e6e6e" />
                  </FootSvg>
                  <FootSvg viewBox="0 0 28 30">
                    <rect x="8" y="6" width="19" height="21" fill="none" stroke={ICON} strokeWidth="2" />
                    <path d="M17 11v11M12 16.500h10M1 1v10h7" stroke={ICON} strokeWidth="2" fill="none" />
                  </FootSvg>
                  <FootSvg viewBox="0 0 28 30">
                    <rect x="3" y="2" width="21" height="26" fill="none" stroke={ICON} strokeWidth="2" />
                    <path d="M13.500 9v12M7.500 15h12" stroke={ICON} strokeWidth="2" />
                  </FootSvg>
                  <FootSvg viewBox="0 0 28 30">
                    <path d="M4 7h20l-2 22H6zM2 5h24M10 5V1h8v4M10 10v15M14 10v15M18 10v15" stroke={ICON} strokeWidth="2" fill="none" />
                  </FootSvg>
                </FootIcons>
              </LayerFoot>
            </LayersPanel>
          </Dock>
        </Main>
      </Window>
    </>
  );
}
